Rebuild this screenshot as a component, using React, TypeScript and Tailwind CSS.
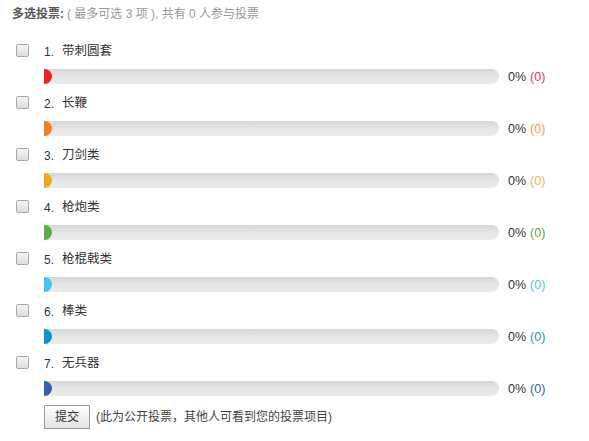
const options = [
  { label: '带刺圆套', bar: 'bg-[#ee2424]', count: 'text-[#e8336a]' },
  { label: '长鞭', bar: 'bg-[#f57d22]', count: 'text-[#f5965a]' },
  { label: '刀剑类', bar: 'bg-[#f3a81f]', count: 'text-[#f2b460]' },
  { label: '枪炮类', bar: 'bg-[#5cae48]', count: 'text-[#5f9f45]' },
  { label: '枪棍戟类', bar: 'bg-[#44c4f4]', count: 'text-[#55bdf0]' },
  { label: '棒类', bar: 'bg-[#0597d4]', count: 'text-[#1a8ed0]' },
  { label: '无兵器', bar: 'bg-[#3163b2]', count: 'text-[#3a5f9f]' },
];

export default function App() {
  return (
    <div
      className="w-[589px] h-[441px] bg-white text-[12px] text-[#333]"
      style={{ fontFamily: '"Liberation Sans", "Noto Sans CJK SC", sans-serif' }}
    >
      <div className="h-[28px] flex items-center pl-3">
        <span className="font-bold text-[#555]">多选投票:</span>
        <span className="text-[#999] ml-[3px]">( 最多可选 3 项 ), 共有 0 人参与投票</span>
      </div>

      <div className="mt-[10px]">
        {options.map((o, i) => (
          <div key={o.label}>
            <div className="h-[24px] flex items-center">
              <div className="w-[44px] pl-[16px]">
                <div className="w-[13px] h-[13px] rounded-[2px] border border-[#a9a9a9] bg-gradient-to-b from-[#f4f4f4] to-[#dedede]" />
              </div>
              <span className="pt-[3px]">{i + 1}.</span>
              <span className="ml-[8px] pt-[3px] text-[12.5px]">{o.label}</span>
            </div>
            <div className="h-[28px] flex items-center pl-[44px]">
              <div className="w-[455px] h-[15px] rounded-r-full bg-gradient-to-b from-[#d6d6d6] via-[#e6e6e6] to-[#ebebeb] overflow-hidden">
                <div className={`w-[8px] h-full rounded-r-full ${o.bar}`} />
              </div>
              <span className="ml-[9px] pt-[2px] text-[12.5px]">0%</span>
              <span className={`ml-[4px] pt-[2px] text-[12.5px] ${o.count}`}>(0)</span>
            </div>
          </div>
        ))}
      </div>

      <div className="mt-[3px] pl-[44px] flex items-center">
        <button className="w-[46px] h-[24px] border border-[#9a9a9a] bg-gradient-to-b from-[#ffffff] to-[#e3e3e3] text-[#333] text-[12px]">
          提交
        </button>
        <span className="ml-[6px] text-[#444]">(此为公开投票，其他人可看到您的投票项目)</span>
      </div>
    </div>
  );
}
